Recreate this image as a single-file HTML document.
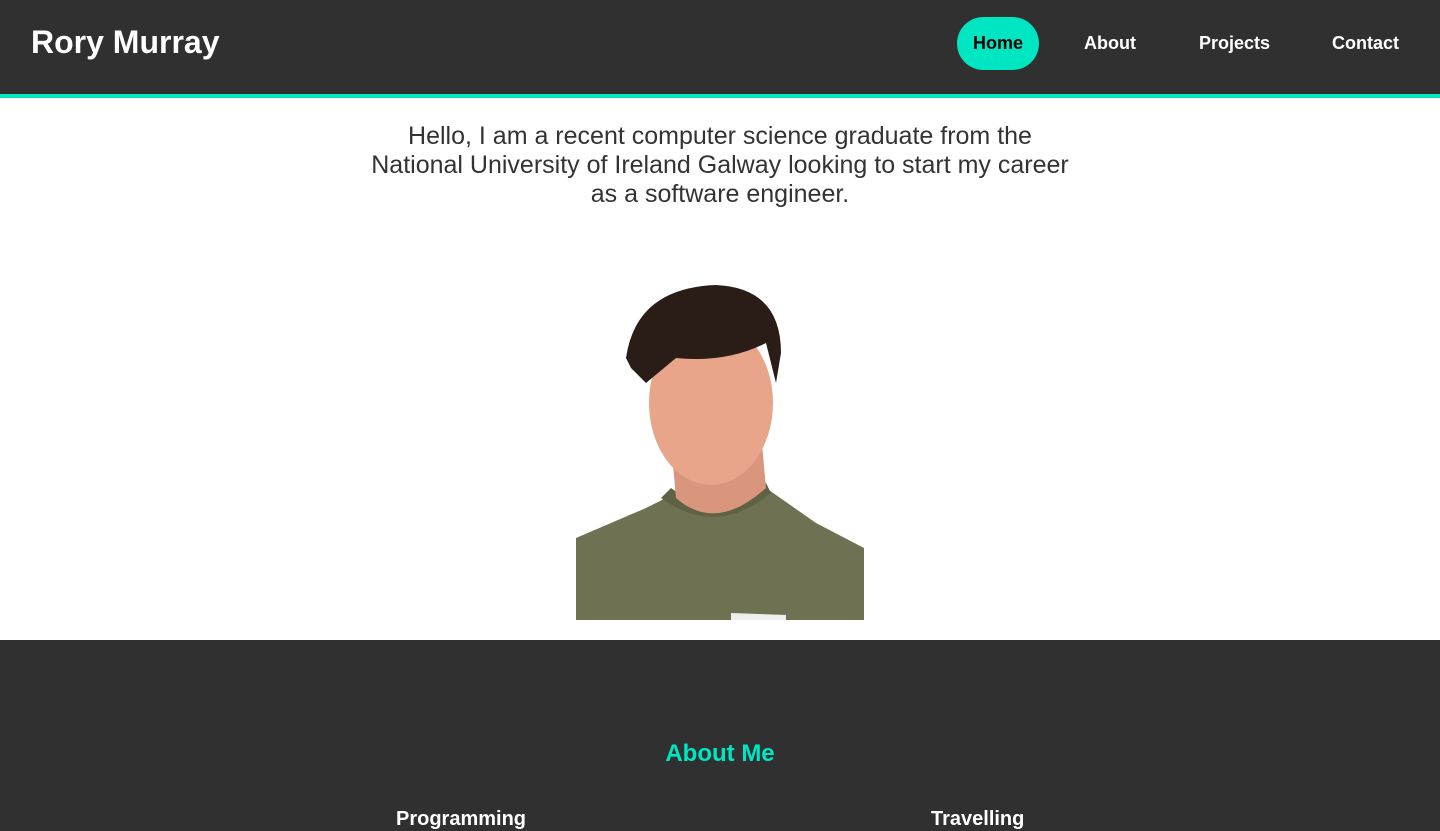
<!DOCTYPE html>
<html><head><style>
*{margin:0;padding:0;box-sizing:border-box}
body{width:1440px;height:831px;overflow:hidden;background:#fff;font-family:"Liberation Sans",Arial,sans-serif}
header{height:98px;background:#303030;border-bottom:4px solid #00e6c3;position:relative}
.logo{position:absolute;left:31px;top:24px;color:#fff;font-size:32px;font-weight:bold}
nav a{position:absolute;top:17px;height:53px;line-height:53px;color:#fff;font-weight:bold;font-size:18px;text-decoration:none}
.home{left:957px;width:82px;background:#00e6c3;color:#000!important;border-radius:27px;text-align:center}
.intro{position:absolute;top:122px;left:0;width:1440px;text-align:center;font-size:25px;line-height:29px;color:#333}
.dark{position:absolute;top:640px;left:0;width:1440px;height:191px;background:#303030}
.dark h2{position:absolute;top:100px;width:100%;text-align:center;color:#00e6c3;font-size:24px}
.dark h3{position:absolute;top:168px;color:#fff;font-size:20px}
</style></head><body>
<header><div class="logo">Rory Murray</div>
<nav><a class="home">Home</a><a style="left:1084px">About</a><a style="left:1199px">Projects</a><a style="left:1332px">Contact</a></nav></header>
<div class="intro">Hello, I am a recent computer science graduate from the<br>National University of Ireland Galway looking to start my career<br>as a software engineer.</div>
<svg style="position:absolute;left:576px;top:283px" width="288" height="337" viewBox="0 0 288 337">
<path d="M0 255 L70 225 L100 210 L190 205 L240 240 L288 265 L288 337 L0 337Z" fill="#6f7252"/>
<path d="M85 215 Q140 255 195 210 L190 200 Q140 240 95 205Z" fill="#5f6245"/>
<path d="M95 160 L100 215 Q140 250 190 205 L185 150Z" fill="#d9967c"/>
<ellipse cx="135" cy="120" rx="62" ry="82" fill="#e8a58a"/>
<path d="M50 75 Q60 5 140 2 Q205 5 205 70 L200 100 L190 60 Q150 80 100 75 L70 100 L55 85Z" fill="#2a1d17"/>
<path d="M155 330 L210 332 L210 337 L155 337Z" fill="#eee"/>
</svg>
<div class="dark"><h2>About Me</h2><h3 style="left:396px">Programming</h3><h3 style="left:931px">Travelling</h3></div>
</body></html>
